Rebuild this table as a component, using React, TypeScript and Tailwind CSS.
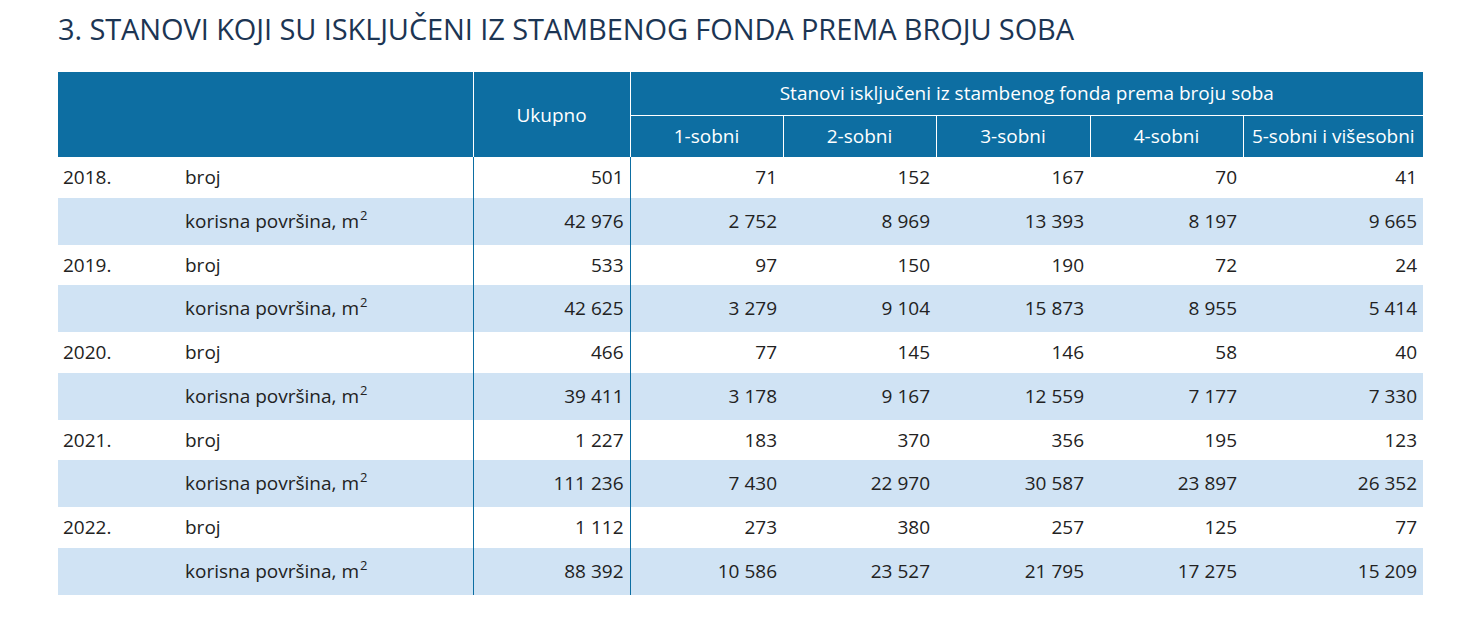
import React from "react";

const rows = [
  { year: "2018.", broj: ["501", "71", "152", "167", "70", "41"], pov: ["42 976", "2 752", "8 969", "13 393", "8 197", "9 665"] },
  { year: "2019.", broj: ["533", "97", "150", "190", "72", "24"], pov: ["42 625", "3 279", "9 104", "15 873", "8 955", "5 414"] },
  { year: "2020.", broj: ["466", "77", "145", "146", "58", "40"], pov: ["39 411", "3 178", "9 167", "12 559", "7 177", "7 330"] },
  { year: "2021.", broj: ["1 227", "183", "370", "356", "195", "123"], pov: ["111 236", "7 430", "22 970", "30 587", "23 897", "26 352"] },
  { year: "2022.", broj: ["1 112", "273", "380", "257", "125", "77"], pov: ["88 392", "10 586", "23 527", "21 795", "17 275", "15 209"] },
];

const subHeads = ["1-sobni", "2-sobni", "3-sobni", "4-sobni", "5-sobni i višesobni"];

export default function App() {
  return (
    <div className="w-[1471px] h-[637px] bg-white" style={{ fontFamily: '"Open Sans", "Noto Sans", sans-serif' }}>
      <div className="pl-[58px] pt-[11px]">
        <h1 className="text-[29px] leading-[36px] text-[#1c3553] font-normal tracking-[-0.1px]">
          3. STANOVI KOJI SU ISKLJUČENI IZ STAMBENOG FONDA PREMA BROJU SOBA
        </h1>
        <table className="mt-[25px] w-[1365px] table-fixed border-collapse text-[19px] text-[#222]">
          <colgroup>
            <col className="w-[122px]" />
            <col className="w-[293px]" />
            <col className="w-[157px]" />
            <col className="w-[153px]" />
            <col className="w-[153px]" />
            <col className="w-[154px]" />
            <col className="w-[153px]" />
            <col className="w-[180px]" />
          </colgroup>
          <thead className="bg-[#0d6ea2] text-white">
            <tr className="h-[43px]">
              <th colSpan={2} rowSpan={2} className="border-r border-white"></th>
              <th rowSpan={2} className="border-r border-white font-normal text-center pt-[2px]">Ukupno</th>
              <th colSpan={5} className="border-b border-white font-normal text-center">
                Stanovi isključeni iz stambenog fonda prema broju soba
              </th>
            </tr>
            <tr className="h-[42px]">
              {subHeads.map((h, i) => (
                <th key={h} className={`font-normal text-center whitespace-nowrap ${i < 4 ? "border-r border-white" : ""}`}>
                  {h}
                </th>
              ))}
            </tr>
          </thead>
          <tbody>
            {rows.map((r) => (
              <React.Fragment key={r.year}>
                <tr className="h-[40.5px] bg-white">
                  <td className="pl-[5px]">{r.year}</td>
                  <td className="pl-[5px]">broj</td>
                  {r.broj.map((v, i) => (
                    <td
                      key={i}
                      className={`text-right pr-[6px] ${i === 0 ? "border-l border-r border-[#0d6ea2]" : ""}`}
                    >
                      {v}
                    </td>
                  ))}
                </tr>
                <tr className="h-[47px] bg-[#d0e3f4]">
                  <td></td>
                  <td className="pl-[5px]">
                    korisna površina, m<sup className="text-[13px] relative top-[-8px] ml-[1px]">2</sup>
                  </td>
                  {r.pov.map((v, i) => (
                    <td
                      key={i}
                      className={`text-right pr-[6px] ${i === 0 ? "border-l border-r border-[#0d6ea2]" : ""}`}
                    >
                      {v}
                    </td>
                  ))}
                </tr>
              </React.Fragment>
            ))}
          </tbody>
        </table>
      </div>
    </div>
  );
}
